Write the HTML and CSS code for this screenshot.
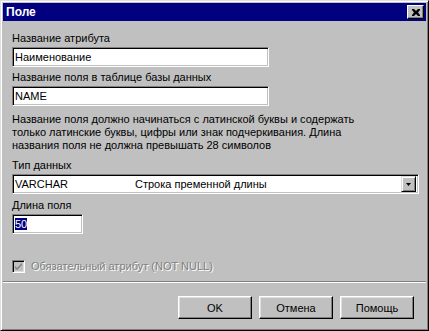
FILE: index.html
```html
<!DOCTYPE html>
<html lang="ru">
<head>
    <meta charset="UTF-8">
    <title>Поле</title>
    <link rel="stylesheet" href="styles.css">
</head>
<body>
    <div class="window">
        <div class="title-bar">
            <span class="title">Поле</span>
            <button class="close-button">
                <svg width="8" height="7" viewBox="0 0 8 7">
                    <path d="M0 0h2l2 2 2-2h2v1L6 3.5 8 6v1H6L4 5 2 7H0V6l2-2.5L0 1z" fill="#000"/>
                </svg>
            </button>
        </div>

        <div class="content">
            <label class="field-label">Название атрибута</label>
            <div class="text-field wide">Наименование</div>

            <label class="field-label">Название поля в таблице базы данных</label>
            <div class="text-field wide">NAME</div>

            <p class="hint">
                Название поля должно начинаться с латинской буквы и содержать<br>
                только латинские буквы, цифры или знак подчеркивания. Длина<br>
                названия поля не должна превышать 28 символов
            </p>

            <label class="field-label">Тип данных</label>
            <div class="combo">
                <span class="combo-code">VARCHAR</span>
                <span class="combo-name">Строка пременной длины</span>
                <span class="combo-button">
                    <svg width="5" height="3" viewBox="0 0 5 3"><path d="M0 0h5L2.5 3z" fill="#000"/></svg>
                </span>
            </div>

            <label class="field-label">Длина поля</label>
            <div class="text-field short"><span class="selected">50</span></div>

            <div class="checkbox-row">
                <span class="checkbox">
                    <svg width="9" height="9" viewBox="0 0 9 9"><path d="M1 4l2 2 5-5v2L3 8 1 6z" fill="#808080"/></svg>
                </span>
                <span class="disabled-text">Обязательный атрибут (NOT NULL)</span>
            </div>
        </div>

        <div class="separator"></div>

        <div class="button-row">
            <button class="push-button">OK</button>
            <button class="push-button">Отмена</button>
            <button class="push-button">Помощь</button>
        </div>
    </div>
</body>
</html>
```

FILE: styles.css
```css
* {
    margin: 0;
    padding: 0;
    box-sizing: border-box;
}

body {
    font-family: "Liberation Sans", Arial, sans-serif;
    font-size: 11px;
    line-height: 13px;
    color: #000;
    background-color: #c0c0c0;
}

.window {
    width: 429px;
    height: 331px;
    background-color: #c0c0c0;
    border: 1px solid;
    border-color: #dfdfdf #000 #000 #dfdfdf;
    box-shadow: inset 1px 1px #fff, inset -1px -1px #808080;
    padding: 2px;
    display: flex;
    flex-direction: column;
}

/* Title bar */
.title-bar {
    height: 18px;
    background-color: #000080;
    display: flex;
    align-items: center;
    justify-content: space-between;
    padding: 0 2px 0 3px;
}

.title {
    color: #fff;
    font-weight: bold;
    font-size: 12px;
}

.close-button {
    width: 17px;
    height: 14px;
    background-color: #c0c0c0;
    border: 1px solid;
    border-color: #fff #000 #000 #fff;
    box-shadow: inset -1px -1px #808080;
    display: flex;
    align-items: center;
    justify-content: center;
}

/* Form */
.content {
    padding: 11px 9px 0 9px;
    display: flex;
    flex-direction: column;
    align-items: flex-start;
}

.field-label {
    display: block;
}

.text-field {
    height: 20px;
    margin-top: 2px;
    margin-bottom: 4px;
    background-color: #fff;
    border: 1px solid;
    border-color: #808080 #fff #fff #808080;
    box-shadow: inset 1px 1px #000, inset -1px -1px #c0c0c0;
    padding: 3px 2px 0 2px;
    white-space: nowrap;
}

.wide {
    width: 257px;
}

.short {
    width: 71px;
}

.selected {
    background-color: #000080;
    color: #fff;
}

.hint {
    margin-top: 3px;
    margin-bottom: 7px;
}

.combo {
    width: 407px;
    height: 20px;
    margin-top: 2px;
    margin-bottom: 5px;
    background-color: #fff;
    border: 1px solid;
    border-color: #808080 #fff #fff #808080;
    box-shadow: inset 1px 1px #000, inset -1px -1px #c0c0c0;
    padding: 2px;
    display: flex;
    align-items: center;
}

.combo-code {
    width: 120px;
}

.combo-name {
    flex: 1;
}

.combo-button {
    width: 15px;
    height: 16px;
    background-color: #c0c0c0;
    border: 1px solid;
    border-color: #dfdfdf #000 #000 #dfdfdf;
    box-shadow: inset 1px 1px #fff, inset -1px -1px #808080;
    display: flex;
    align-items: center;
    justify-content: center;
}

.checkbox-row {
    margin-top: 22px;
    display: flex;
    align-items: center;
    gap: 6px;
}

.checkbox {
    width: 13px;
    height: 13px;
    background-color: #c0c0c0;
    border: 1px solid;
    border-color: #808080 #fff #fff #808080;
    box-shadow: inset 1px 1px #000, inset -1px -1px #dfdfdf;
    display: flex;
    align-items: center;
    justify-content: center;
}

.disabled-text {
    color: #808080;
    text-shadow: 1px 1px #fff;
}

.separator {
    margin-top: 8px;
    height: 2px;
    border-top: 1px solid #808080;
    border-bottom: 1px solid #fff;
}

/* Buttons */
.button-row {
    display: flex;
    justify-content: flex-end;
    gap: 7px;
    padding: 13px 12px 0 0;
}

.push-button {
    width: 74px;
    height: 23px;
    font-family: "Liberation Sans", Arial, sans-serif;
    font-size: 11px;
    background-color: #c0c0c0;
    border: 1px solid;
    border-color: #fff #000 #000 #fff;
    box-shadow: inset -1px -1px #808080, inset 1px 1px #dfdfdf;
}
```
